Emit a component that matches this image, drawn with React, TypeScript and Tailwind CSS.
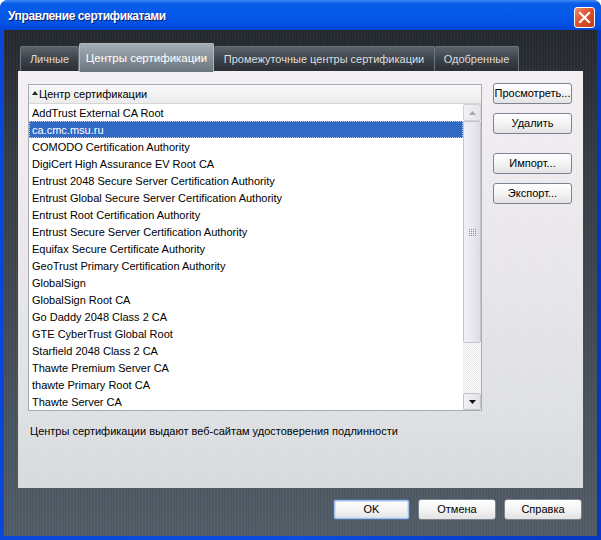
import React from "react";

const rows = [
  "AddTrust External CA Root",
  "ca.cmc.msu.ru",
  "COMODO Certification Authority",
  "DigiCert High Assurance EV Root CA",
  "Entrust 2048 Secure Server Certification Authority",
  "Entrust Global Secure Server Certification Authority",
  "Entrust Root Certification Authority",
  "Entrust Secure Server Certification Authority",
  "Equifax Secure Certificate Authority",
  "GeoTrust Primary Certification Authority",
  "GlobalSign",
  "GlobalSign Root CA",
  "Go Daddy 2048 Class 2 CA",
  "GTE CyberTrust Global Root",
  "Starfield 2048 Class 2 CA",
  "Thawte Premium Server CA",
  "thawte Primary Root CA",
  "Thawte Server CA",
];

const font = { fontFamily: '"Liberation Sans", Arial, sans-serif' };

function Btn({ label, def = false, w = "w-[79px]" }: { label: string; def?: boolean; w?: string }) {
  return (
    <div
      className={`${w} h-[21px] shrink-0 rounded-[3px] border ${
        def ? "border-[#5a6f8c]" : "border-[#7b8591]"
      } bg-[linear-gradient(#ffffff,#f4f4f4_50%,#e2e2e2)] flex items-center justify-center text-[11px] text-black ${
        def ? "shadow-[inset_0_0_0_1px_#9fc0ec,inset_0_0_0_2px_#cfe0f7]" : ""
      }`}
    >
      {label}
    </div>
  );
}

export default function App() {
  return (
    <div className="w-[601px] h-[540px] bg-white" style={font}>
      <div className="w-full h-full flex flex-col rounded-t-[8px] overflow-hidden bg-[linear-gradient(90deg,#0a47d9,#0a4be0_50%,#0736c0)]">
        {/* Title bar */}
        <div className="h-[30px] shrink-0 flex items-center justify-between pl-[8px] pr-[6px] bg-[linear-gradient(#3d8cf7,#0a5ae9_12%,#0559ea_45%,#0452e4_75%,#0346d6)]">
          <span className="text-white font-bold text-[12px] tracking-[-0.4px] mt-[2px] [text-shadow:1px_1px_0_#0a1e6a]">
            Управление сертификатами
          </span>
          <div className="w-[21px] h-[21px] mt-[4px] rounded-[3px] border border-white bg-[linear-gradient(135deg,#ee8c6d,#e0532e_45%,#c23c18)] flex items-center justify-center">
            <svg width="13" height="13" viewBox="0 0 13 13">
              <path d="M2 2 L11 11 M11 2 L2 11" stroke="white" strokeWidth="2.2" strokeLinecap="square" />
            </svg>
          </div>
        </div>

        {/* Body */}
        <div className="flex-1 mx-[4px] mb-[4px] flex flex-col px-[14px] pt-[13px] pb-[16px] bg-[image:repeating-linear-gradient(90deg,rgba(255,255,255,0.035)_0px,rgba(255,255,255,0.035)_1px,transparent_1px,transparent_3px),linear-gradient(#23282d,#343b42_25%,#48525c_75%,#505b66)]">
          {/* Tabs */}
          <div className="h-[28px] shrink-0 flex items-end pl-[2px] text-[11px]">
            <div className="w-[59px] h-[25px] border border-b-0 border-[#6c747c] rounded-t-[2px] bg-[linear-gradient(#5b636b,#3a4047_55%,#2b3035)] text-[#dedede] flex items-center justify-center">
              Личные
            </div>
            <div className="w-[135px] h-[29px] -mb-[1px] z-10 border border-b-0 border-[#b0b8bf] rounded-t-[2px] bg-[linear-gradient(#a2acb4,#8a949d_45%,#6b757e)] text-white text-[11.5px] pt-[2px] flex items-center justify-center">
              Центры сертификации
            </div>
            <div className="w-[221px] h-[25px] border border-b-0 border-l-0 border-[#6c747c] rounded-t-[2px] bg-[linear-gradient(#5b636b,#3a4047_55%,#2b3035)] text-[#dedede] flex items-center justify-center">
              Промежуточные центры сертификации
            </div>
            <div className="w-[84px] h-[25px] border border-b-0 border-l-0 border-[#6c747c] rounded-t-[2px] bg-[linear-gradient(#5b636b,#3a4047_55%,#2b3035)] text-[#dedede] flex items-center justify-center">
              Одобренные
            </div>
          </div>

          {/* Panel */}
          <div className="h-[417px] shrink-0 flex flex-col pl-[10px] pr-[11px] bg-[image:repeating-linear-gradient(90deg,rgba(0,0,0,0.012)_0px,rgba(0,0,0,0.012)_1px,transparent_1px,transparent_3px),linear-gradient(#f4f0f3,#ece9ec_40%,#e0e2e5_80%,#d8dcdf)]">
            <div className="flex items-start">
              {/* List */}
              <div className="mt-[13px] w-[454px] h-[327px] border border-[#a7adb5] bg-white flex flex-col">
                <div className="h-[19px] shrink-0 flex items-center pl-[3px] border-b border-[#d6d6d6] bg-[linear-gradient(#f8f8f8,#ececec)] text-[11px] text-black">
                  <svg width="6" height="4" viewBox="0 0 6 4" className="mr-[1px] mb-[3px]">
                    <path d="M0 4 L3 0 L6 4 Z" fill="#222" />
                  </svg>
                  Центр сертификации
                </div>
                <div className="flex flex-1">
                  <div className="w-[434px] flex flex-col">
                    {rows.map((r, i) => (
                      <div
                        key={r}
                        className={`h-[17px] shrink-0 flex items-center pl-[3px] pt-[1px] text-[11px] whitespace-nowrap ${
                          i === 1
                            ? "bg-[#316ac5] text-white outline-1 outline-dotted outline-[#b9c9ea] -outline-offset-1"
                            : "text-black"
                        }`}
                      >
                        {r}
                      </div>
                    ))}
                  </div>
                  {/* Scrollbar */}
                  <div className="w-[18px] flex flex-col bg-[image:repeating-conic-gradient(#e4e4e4_0_25%,#ffffff_0_50%)] bg-[length:2px_2px]">
                    <div className="h-[17px] shrink-0 border border-[#d0d0d8] rounded-[2px] bg-[linear-gradient(90deg,#f2f2f4,#e4e4ea)] flex items-center justify-center">
                      <svg width="7" height="4" viewBox="0 0 7 4">
                        <path d="M0 4 L3.5 0 L7 4 Z" fill="#a8a8a8" />
                      </svg>
                    </div>
                    <div className="h-[222px] shrink-0 border border-[#c4c4d0] rounded-[2px] bg-[linear-gradient(90deg,#f0f0f4,#e6e6ee_60%,#dcdce6)] flex items-center justify-center">
                      <div className="grid grid-cols-4 gap-[1px]">
                        {Array.from({ length: 16 }).map((_, k) => (
                          <div key={k} className="w-[1px] h-[1px] bg-[#8a8aa0]" />
                        ))}
                      </div>
                    </div>
                    <div className="flex-1" />
                    <div className="h-[17px] shrink-0 border border-[#c4c4cc] rounded-[2px] bg-[linear-gradient(90deg,#f2f2f4,#e2e2e8)] flex items-center justify-center">
                      <svg width="7" height="4" viewBox="0 0 7 4">
                        <path d="M0 0 L7 0 L3.5 4 Z" fill="#111" />
                      </svg>
                    </div>
                  </div>
                </div>
              </div>

              {/* Right buttons */}
              <div className="ml-[11px] mt-[12px] flex flex-col">
                <Btn label="Просмотреть..." />
                <div className="h-[9px]" />
                <Btn label="Удалить" />
                <div className="h-[19px]" />
                <Btn label="Импорт..." />
                <div className="h-[9px]" />
                <Btn label="Экспорт..." />
              </div>
            </div>
            <div className="mt-[14px] pl-[2px] text-[11px] text-black leading-[13px]">
              Центры сертификации выдают веб-сайтам удостоверения подлинности
            </div>
          </div>

          {/* Bottom buttons */}
          <div className="mt-[11px] flex justify-end gap-[8px] pr-[1px]">
            <Btn label="OK" def w="w-[77px]" />
            <Btn label="Отмена" w="w-[78px]" />
            <Btn label="Справка" w="w-[78px]" />
          </div>
        </div>
      </div>
    </div>
  );
}
